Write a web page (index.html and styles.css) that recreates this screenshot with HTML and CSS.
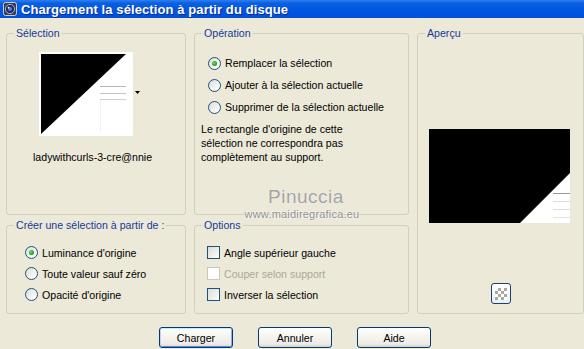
FILE: index.html
```html
<!DOCTYPE html>
<html lang="fr">
<head>
    <meta charset="UTF-8">
    <title>Chargement la sélection à partir du disque</title>
    <link rel="stylesheet" href="styles.css">
</head>
<body>
    <div class="window">
        <div class="titlebar">
            <svg class="app-icon" width="14" height="14" viewBox="0 0 14 14">
                <rect x="0.5" y="0.5" width="13" height="13" rx="2" fill="#3b3d48" stroke="#c9cbd6"/>
                <circle cx="7" cy="7" r="4.6" fill="#1d2a66" stroke="#9fb2e0" stroke-width="1"/>
                <circle cx="7" cy="7" r="2" fill="#5f7fd0"/>
                <circle cx="5.6" cy="5.6" r="0.9" fill="#ffffff"/>
            </svg>
            <span class="title">Chargement la sélection à partir du disque</span>
        </div>

        <div class="dialog">
            <div class="groups">
                <!-- Sélection -->
                <fieldset class="group g-selection">
                    <legend>Sélection</legend>
                    <div class="thumb-row">
                        <svg width="102" height="84" viewBox="0 0 102 84">
                            <rect x="0" y="0" width="94" height="84" fill="#ffffff"/>
                            <polygon points="2,2 87,2 2,82" fill="#000000"/>
                            <line x1="61" y1="34.5" x2="87" y2="34.5" stroke="#b8b8b8"/>
                            <line x1="61" y1="41.5" x2="87" y2="41.5" stroke="#c4c4c4"/>
                            <line x1="61" y1="47.5" x2="87" y2="47.5" stroke="#d0d0d0"/>
                            <line x1="61.5" y1="48" x2="61.5" y2="80" stroke="#f0f0f0"/>
                            <polygon points="96,39 101,39 98.5,42" fill="#000000"/>
                        </svg>
                    </div>
                    <div class="filename">ladywithcurls-3-cre@nnie</div>
                </fieldset>

                <!-- Opération -->
                <fieldset class="group g-operation">
                    <legend>Opération</legend>
                    <div class="choices">
                        <label class="choice"><span class="radio checked"></span>Remplacer la sélection</label>
                        <label class="choice"><span class="radio"></span>Ajouter à la sélection actuelle</label>
                        <label class="choice"><span class="radio"></span>Supprimer de la sélection actuelle</label>
                    </div>
                    <p class="note">Le rectangle d'origine de cette<br>sélection ne correspondra pas<br>complètement au support.</p>
                </fieldset>

                <!-- Aperçu -->
                <fieldset class="group g-apercu">
                    <legend>Aperçu</legend>
                    <div class="preview">
                        <svg width="141" height="94" viewBox="0 0 141 94">
                            <rect x="0" y="0" width="141" height="94" fill="#000000"/>
                            <polygon points="141,44 141,94 91,94" fill="#ffffff"/>
                            <line x1="124" y1="64.5" x2="141" y2="64.5" stroke="#999999"/>
                            <line x1="124" y1="72.5" x2="141" y2="72.5" stroke="#dddddd"/>
                            <line x1="124" y1="80.5" x2="141" y2="80.5" stroke="#dddddd"/>
                            <line x1="124" y1="88.5" x2="141" y2="88.5" stroke="#e4e4e4"/>
                        </svg>
                    </div>
                    <div class="checker-row">
                        <span class="checker-btn"><span class="checker"></span></span>
                    </div>
                </fieldset>

                <!-- Créer une sélection -->
                <fieldset class="group g-creer">
                    <legend>Créer une sélection à partir de :</legend>
                    <div class="choices tight">
                        <label class="choice"><span class="radio checked"></span>Luminance d'origine</label>
                        <label class="choice"><span class="radio"></span>Toute valeur sauf zéro</label>
                        <label class="choice"><span class="radio"></span>Opacité d'origine</label>
                    </div>
                </fieldset>

                <!-- Options -->
                <fieldset class="group g-options">
                    <legend>Options</legend>
                    <div class="choices tight">
                        <label class="choice"><span class="check"></span>Angle supérieur gauche</label>
                        <label class="choice disabled"><span class="check"></span>Couper selon support</label>
                        <label class="choice"><span class="check"></span>Inverser la sélection</label>
                    </div>
                </fieldset>
            </div>

            <div class="buttons">
                <button class="btn default">Charger</button>
                <button class="btn">Annuler</button>
                <button class="btn">Aide</button>
            </div>
        </div>

        <div class="watermark">
            <div class="wm-name">Pinuccia</div>
            <div class="wm-url">www.maidiregrafica.eu</div>
        </div>
    </div>
</body>
</html>
```

FILE: styles.css
```css
html, body {
    margin: 0;
    padding: 0;
}
body {
    width: 584px;
    height: 349px;
    overflow: hidden;
    background: #ece9d8;
    font-family: "Liberation Sans", Arial, sans-serif;
    font-size: 10.6px;
    color: #000;
}
.window {
    position: relative;
    width: 584px;
    height: 349px;
}

/* Barre de titre XP */
.titlebar {
    height: 18px;
    display: flex;
    align-items: center;
    padding-left: 3px;
    background: linear-gradient(#2f7ef0 0%, #0a5fe0 18%, #0055e3 60%, #0050da 100%);
}
.app-icon {
    flex: none;
}
.title {
    margin-left: 4px;
    color: #fff;
    font-weight: bold;
    font-size: 13px;
    letter-spacing: 0.1px;
    text-shadow: 1px 1px 0 #0b2a8c;
}

.dialog {
    padding: 9px 0 0 6px;
}
.groups {
    display: grid;
    grid-template-columns: 180px 215px 167px;
    grid-template-rows: 188px 95px;
    column-gap: 8px;
    row-gap: 4px;
}
.group {
    margin: 0;
    padding: 0;
    min-width: 0;
    border: 1px solid #d0d0bf;
    border-radius: 3px;
}
.group legend {
    margin-left: 7px;
    padding: 0 2px;
    color: #15399a;
    line-height: 13px;
}
.g-selection { grid-column: 1; grid-row: 1; }
.g-operation { grid-column: 2; grid-row: 1; }
.g-apercu { grid-column: 3; grid-row: 1 / span 2; }
.g-creer { grid-column: 1; grid-row: 2; }
.g-options { grid-column: 2; grid-row: 2; }

/* Sélection */
.thumb-row {
    padding: 12px 0 0 32px;
    line-height: 0;
}
.filename {
    margin-top: 15px;
    padding-left: 26px;
    line-height: 13px;
}

/* Boutons radio / cases */
.choices {
    padding: 12px 0 0 13px;
}
.choice {
    display: flex;
    align-items: center;
    height: 22px;
    white-space: nowrap;
}
.choices.tight .choice {
    height: 21px;
}
.g-creer .choices {
    padding: 10px 0 0 18px;
}
.g-options .choices {
    padding: 10px 0 0 12px;
}
.radio {
    flex: none;
    position: relative;
    width: 11px;
    height: 11px;
    margin-right: 4px;
    border: 1px solid #1c5180;
    border-radius: 50%;
    background: linear-gradient(135deg, #dcdcd7 0%, #f4f4f0 60%, #ffffff 100%);
}
.radio.checked::after {
    content: "";
    position: absolute;
    left: 3px;
    top: 3px;
    width: 5px;
    height: 5px;
    border-radius: 50%;
    background: radial-gradient(circle at 40% 40%, #5ee65e 0%, #21a121 60%, #1a8a1a 100%);
}
.check {
    flex: none;
    width: 11px;
    height: 11px;
    margin-right: 4px;
    border: 1px solid #1c5180;
    background: linear-gradient(135deg, #dcdcd7 0%, #f0f0ea 60%, #ffffff 100%);
}
.choice.disabled {
    color: #aca899;
}
.choice.disabled .check {
    border-color: #cac8bb;
    background: #fff;
}

.note {
    margin: 4px 0 0 6px;
    line-height: 14px;
}

/* Aperçu */
.preview {
    margin-top: 89px;
    display: flex;
    justify-content: center;
    padding-right: 2px;
    line-height: 0;
}
.checker-row {
    margin-top: 60px;
    display: flex;
    justify-content: center;
}
.checker-btn {
    width: 18px;
    height: 19px;
    border: 1px solid #1c3f6e;
    border-radius: 3px;
    background: linear-gradient(#ffffff, #e8eef8);
    display: flex;
    align-items: center;
    justify-content: center;
}
.checker {
    width: 12px;
    height: 12px;
    background-color: #ffffff;
    background-image: conic-gradient(#a9a79e 25%, transparent 0 50%, #a9a79e 0 75%, transparent 0);
    background-size: 6px 6px;
}

/* Boutons */
.buttons {
    display: flex;
    justify-content: center;
    gap: 25px;
    margin-top: 13px;
}
.btn {
    width: 74px;
    height: 21px;
    padding: 0;
    font-family: "Liberation Sans", Arial, sans-serif;
    font-size: 10.6px;
    color: #000;
    border: 1px solid #003c74;
    border-radius: 3px;
    background: linear-gradient(#ffffff 0%, #f4f3ee 50%, #ecebe6 85%, #d6d0c5 100%);
}
.btn.default {
    box-shadow: inset 0 1px 0 #cee7ff, inset 1px 0 0 #bcd4f6, inset -1px 0 0 #89adf3, inset 0 -1px 0 #6982ee;
}

/* Filigrane */
.watermark {
    position: absolute;
    left: 234px;
    top: 186px;
    width: 136px;
    text-align: center;
    pointer-events: none;
}
.wm-name {
    padding-left: 8px;
    font-size: 19px;
    line-height: 22px;
    color: #a3a3a3;
    letter-spacing: 0.5px;
    text-shadow: 0 0 1px #fff;
}
.wm-url {
    font-size: 11px;
    line-height: 12px;
    color: #8f8f8f;
    letter-spacing: 0.2px;
    text-shadow: 0 0 2px #fff, 0 0 2px #fff;
}
```
